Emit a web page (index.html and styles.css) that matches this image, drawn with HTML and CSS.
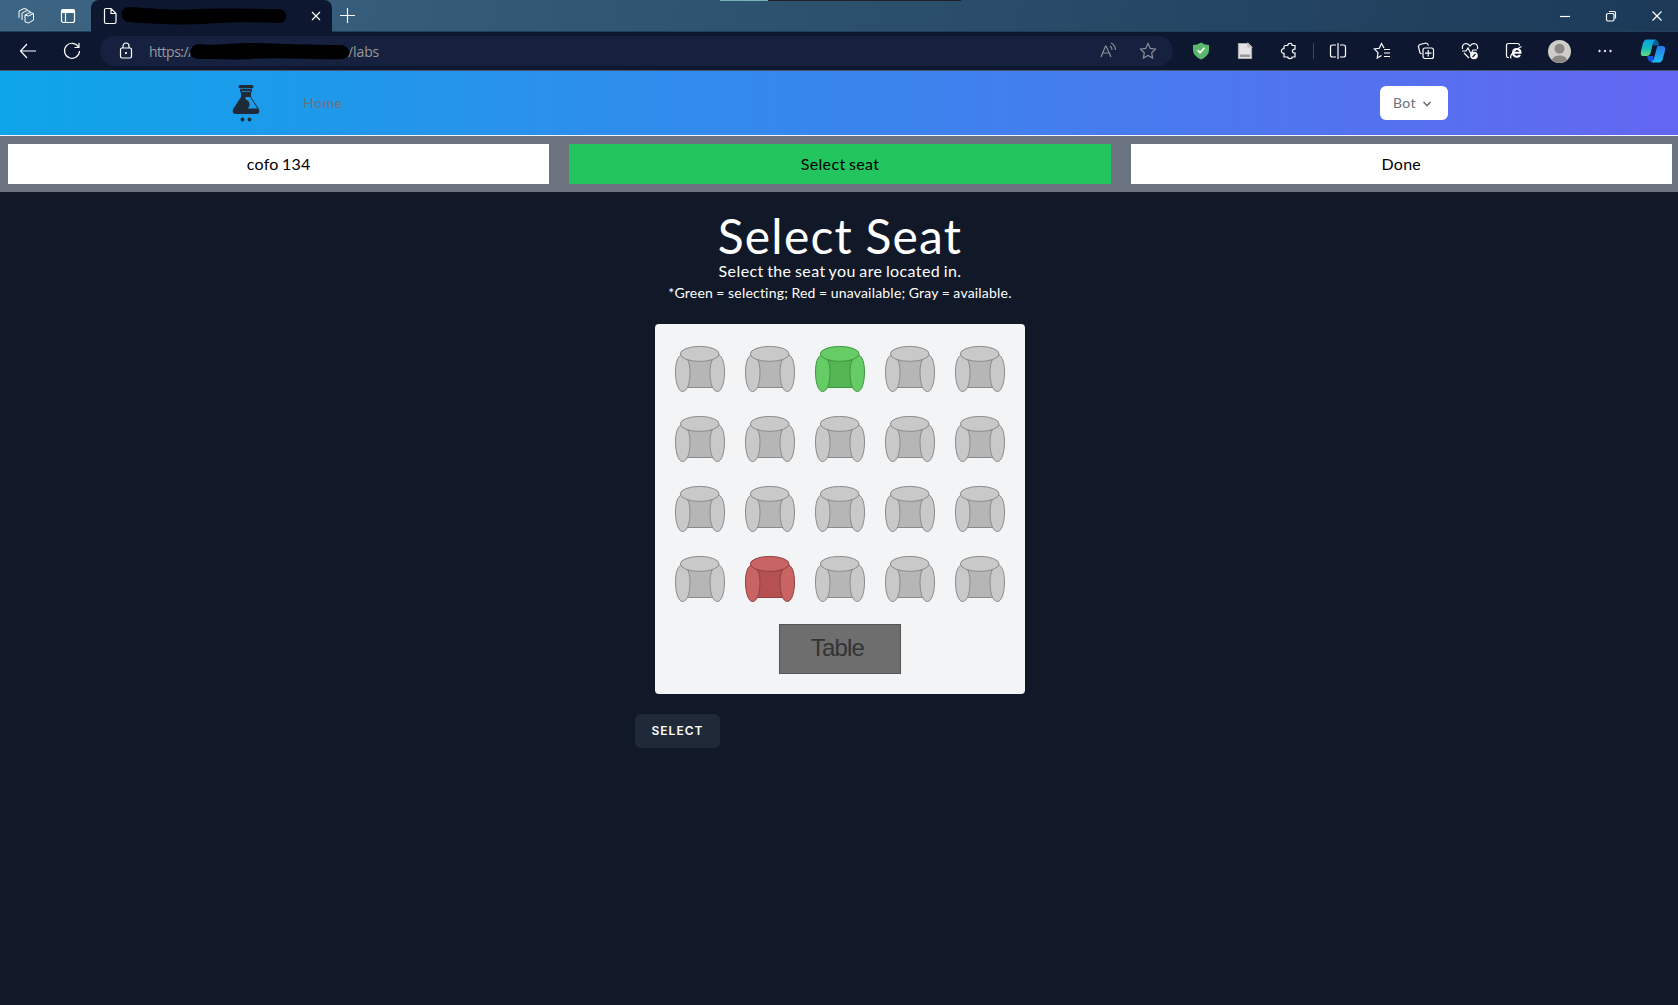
FILE: index.html
```html
<!DOCTYPE html>
<html lang="en">
<head>
<meta charset="utf-8">
<title>Select Seat</title>
<link rel="stylesheet" href="styles.css">
</head>
<body>
<svg class="defs" aria-hidden="true">
  <symbol id="seat" viewBox="0 0 50 50">
    <path class="seat-base" d="M9 16h32v27.500H9z"/>
    <path class="seat-part" d="M6 11C2.500 13 .5 19 .5 28c0 11 3 19.500 7 19.500 5 0 7.500-9 7.500-19.500 0-8-2-16-9-17zM44 11c3.500 2 5.500 8 5.500 17 0 11-3 19.500-7 19.500-5 0-7.500-9-7.500-19.500 0-8 2-16 9-17z"/>
    <ellipse class="seat-part" cx="24.700" cy="9.900" rx="19.400" ry="7.500"/>
  </symbol>
</svg>

<div class="titlebar">
  <div class="title-strip"><i></i><b></b></div>
  <svg class="workspaces" width="18" height="18" viewBox="0 0 18 18"><path d="M8 8l5-2.500 3.500 1v6.500L11.500 16 8 14.800zM8 8l3.500 1 5-2.500M5 13V6l5-2.500 3.500 1M2 10.800V4l5-2.500 3.500 1"/></svg>
  <svg class="tabs-icon" width="16" height="16" viewBox="0 0 16 16"><rect x="1.500" y="1.500" width="13" height="13" rx="2"/><path class="solid" d="M2 2h12v2.500H2z"/><path d="M5.500 5v9.500"/></svg>
  <div class="tab">
    <svg width="14" height="18" viewBox="0 0 14 18"><path d="M1.500 3q0-1.500 1.500-1.500h5l5 5V15q0 1.500-1.500 1.500H3Q1.500 16.500 1.500 15zM8 1.500v5h5"/></svg>
    <svg class="tab-mask" width="166" height="18" viewBox="0 0 166 18"><path class="ink" d="M8 0C28 1 50 4 78 2c25-1 55 0 80 0 10 1 9 14 0 14-25-1-50-1-76 1-25 1-50 0-74-2-10-1-10-15 0-15z"/></svg>
    <svg class="tab-close" width="10" height="10" viewBox="0 0 10 10"><path d="M1 1l8 8M9 1L1 9"/></svg>
  </div>
  <svg class="new-tab" width="15" height="15" viewBox="0 0 15 15"><path d="M7.500 0v15M0 7.500h15"/></svg>
  <div class="window-buttons">
    <svg width="12" height="12" viewBox="0 0 12 12"><path d="M1 6.500h10"/></svg>
    <svg width="12" height="12" viewBox="0 0 12 12"><rect x="1.500" y="3.500" width="7.500" height="7.500" rx="1.500"/><path d="M4 1.500h5Q10.500 1.500 10.500 3v5.500"/></svg>
    <svg width="12" height="12" viewBox="0 0 12 12"><path d="M1.500 1.500l9 9M10.500 1.500l-9 9"/></svg>
  </div>
</div>

<div class="toolbar">
  <svg class="back" width="18" height="16" viewBox="0 0 18 16"><path d="M17 8H1.500M8 1L1.500 8 8 15"/></svg>
  <svg class="reload" width="18" height="18" viewBox="0 0 18 18"><path d="M15.500 5A7.500 7.500 0 1 0 16.500 9M16 1v4.500h-4.500"/></svg>
  <div class="address">
    <svg class="lock" width="14" height="18" viewBox="0 0 14 18"><rect x="1.500" y="6" width="11" height="10" rx="1.500"/><path d="M4 6V4a3 3 0 0 1 6 0v2"/><circle class="solid" cx="7" cy="11" r=".5"/></svg>
    <span class="scheme">https://</span>
    <svg class="url-mask" width="160" height="17" viewBox="0 0 160 17"><path class="ink" d="M8 1C25 3 42 0 60 0c20 0 45 2 92 2 10 2 10 13 0 14-32 1-60-2-90 0-20 1-35 0-54 0C-3 15-2 3 8 1z"/></svg>
    <span>/labs</span>
    <svg class="read" width="18" height="18" viewBox="0 0 18 18"><path d="M2 15L6.500 4h.5l5 11M3.500 11h7M11 4q2 1 2 4M12 1q4 2 4.500 7"/></svg>
    <svg class="star" width="18" height="18" viewBox="0 0 18 18"><path d="M9 1.500l2.300 4.900 5.200.7-3.800 3.700.9 5.300L9 13.500l-4.600 2.600.9-5.300L1.500 7.100l5.200-.7z"/></svg>
  </div>
  <div class="tools">
    <svg class="shield" width="18" height="18" viewBox="0 0 18 18"><path class="green" d="M1 3q4 0 8-2.500Q13 3 17 3v5q0 6-8 9.500Q1 14 1 8z"/><path class="tick" d="M5.500 8l2.500 2.800 4.500-5"/></svg>
    <svg class="note" width="16" height="18" viewBox="0 0 16 18"><path class="paper" d="M1.500 1.500H11l3.500 3.500v11.500h-13z"/><path class="fold" d="M11 1.500V5h3.500z"/><path class="bar" d="M3 12.500h10V15H3z"/></svg>
    <svg class="puzzle" width="18" height="18" viewBox="0 0 18 18"><path d="M5.500 3.500h2.300c0-3 4.400-3 4.400 0H15v3.700c-3.500-.3-3.500 4.100 0 3.800v4h-2.800c0 2.200-4.400 2.200-4.400 0H4v-3.700c-3.500 0-3.500-4.600 0-4.600V5q0-1.500 1.500-1.500z"/></svg>
    <span class="divider"></span>
    <svg class="split" width="18" height="18" viewBox="0 0 18 18"><path d="M7 3H3.500Q1.500 3 1.500 5v8q0 2 2 2H7M11 3h3.500q2 0 2 2v8q0 2-2 2H11M9 1v16"/></svg>
    <svg class="favorites" width="18" height="18" viewBox="0 0 18 18"><path d="M11 6L8.500 1.500 6.300 6.300 1.300 7l3.700 3.700-.8 5.300 4.300-2.500M11 7.500h6M11 11h6M11 14.500h6"/></svg>
    <svg class="collections" width="18" height="18" viewBox="0 0 18 18"><rect x="6" y="6" width="10.500" height="10.500" rx="2"/><path d="M11.200 8v6.500M8 11.200h6.500M4.500 12L3 11 1.500 5q0-2 1.500-2.500L9 1q1.700 0 2.500 2.500"/></svg>
    <svg class="essentials" width="18" height="18" viewBox="0 0 18 18"><path d="M1.500 7C.5 1 6.500 0 9 4c2.500-4 8.500-3 7.500 3M1 9h4l2-3 3 6 2-4h4M3 11l5 5"/><circle class="solid" cx="13" cy="13.500" r="3.200"/><path class="slash" d="M11.500 15l3-3"/></svg>
    <svg class="ie" width="18" height="18" viewBox="0 0 18 18"><path d="M4 15.500H3q-1.500 0-1.500-2V3.500q0-2 2-2h9q2 0 2 2"/><path class="thick" d="M8 10.800h7.500c0-5-7.500-5-7.500 0s6 4.500 7 2.200"/><path d="M6.500 16C3.500 16 8 8 16.500 4.500"/></svg>
    <svg class="avatar" width="23" height="23" viewBox="0 0 23 23"><circle class="face" cx="11.500" cy="11.500" r="11.500"/><circle class="body" cx="11.500" cy="8.700" r="5"/><path class="body" d="M4 20q1-4.500 7.500-4.500T19 20q-3 3-7.500 3T4 20z"/></svg>
    <svg class="more" width="16" height="6" viewBox="0 0 16 6"><g class="solid"><circle cx="2.500" cy="3" r=".8"/><circle cx="8" cy="3" r=".8"/><circle cx="13.500" cy="3" r=".8"/></g></svg>
    <svg class="copilot" width="26" height="24" viewBox="0 0 26 24">
      <defs><linearGradient id="cg" x2="0" y2="1"><stop stop-color="#08a3e8"/><stop offset=".5" stop-color="#12b8bf"/><stop offset="1" stop-color="#64de83"/></linearGradient><linearGradient id="cb" x2="0" y2="1"><stop stop-color="#2678e5"/><stop offset="1" stop-color="#20bdf4"/></linearGradient></defs>
      <path fill="#0d5f9c" stroke="none" d="M13 1h3q2.500 0 3 5.500h-6z"/>
      <path fill="#1252df" stroke="none" d="M7 17h6l1 6q-6 1-7-6z"/>
      <path fill="url(#cg)" stroke="none" d="M7 .5h9q-2.500 1-3.500 5.500l-2 8q-1 3-4 3H3q-3 0-2-5l2-8Q4 .5 7 .5z"/>
      <path fill="url(#cb)" stroke="none" d="M18 7h4.500q3.500 0 2.500 5l-2 7q-1 4.500-4 4.500h-8q2.500-1 3.500-6l2-7.500q.5-3 1.500-3z"/>
    </svg>
  </div>
</div>

<nav class="site-nav">
  <div class="nav-inner">
    <svg class="logo" width="28" height="38" viewBox="0 0 28 38"><path class="dark" d="M8 1h12q1.500 0 1.500 1.500T20 4.500v3l-1 1V13l7.500 11.500Q29 30 24 30H4q-5 0-2.500-5.500L9 13V8.500l-1-1v-3Q6.500 4 6.500 2.500T8 1z"/><path class="glass" d="M8 4.700h12M9.500 7.500h9"/><path class="liquid" d="M14 13h4l7.500 11.500H15.500q2.500-2 2-5t-3.500-4q-1.500-1.500 0-2.500z"/><circle class="dark" cx="10.500" cy="35.500" r="1.900"/><circle class="dark" cx="17.500" cy="35.500" r="1.900"/></svg>
    <a class="home">Home</a>
    <button class="user-menu"><span>Bot</span><svg width="10" height="6" viewBox="0 0 10 6"><path d="M1.500 1L5 4.500 8.500 1"/></svg></button>
  </div>
</nav>

<div class="steps">
  <div class="step"><span>cofo 134</span></div>
  <div class="step current"><span>Select seat</span></div>
  <div class="step"><span>Done</span></div>
</div>

<main>
  <h1><span>Select Seat</span></h1>
  <p class="lead"><span>Select the seat you are located in.</span></p>
  <p class="legend"><span>*Green = selecting; Red = unavailable; Gray = available.</span></p>
  <div class="room">
    <div class="seats">
      <svg><use href="#seat"/></svg><svg><use href="#seat"/></svg><svg class="chosen"><use href="#seat"/></svg><svg><use href="#seat"/></svg><svg><use href="#seat"/></svg>
      <svg><use href="#seat"/></svg><svg><use href="#seat"/></svg><svg><use href="#seat"/></svg><svg><use href="#seat"/></svg><svg><use href="#seat"/></svg>
      <svg><use href="#seat"/></svg><svg><use href="#seat"/></svg><svg><use href="#seat"/></svg><svg><use href="#seat"/></svg><svg><use href="#seat"/></svg>
      <svg><use href="#seat"/></svg><svg class="taken"><use href="#seat"/></svg><svg><use href="#seat"/></svg><svg><use href="#seat"/></svg><svg><use href="#seat"/></svg>
    </div>
    <div class="table">Table</div>
  </div>
  <button class="select">SELECT</button>
</main>
</body>
</html>
```
FILE: styles.css
```css
* { box-sizing: border-box; }
body { margin: 0; height: 1005px; overflow: hidden; background: #111827; font-family: Lato, "Open Sans", sans-serif; color: #fff; }
button { font-family: inherit; border: 0; }
svg { display: block; flex: none; fill: none; stroke: #fff; stroke-width: 1.2; }
.solid { fill: #fff; }
.ink { fill: #000; stroke: none; }
.defs { position: absolute; width: 0; height: 0; }

.titlebar { position: relative; height: 32px; display: flex; align-items: center; background: linear-gradient(100deg, #3d6583, #284c69 60%, #1c3958); border-bottom: 1px solid #203f59; }
.title-strip { position: absolute; top: 0; left: 720px; width: 241px; height: 1px; display: flex; }
.title-strip i { width: 48px; background: #78b4b5; }
.title-strip b { flex: 1; background: #242126; }
.workspaces { margin-left: 17px; stroke-width: 1; }
.tabs-icon { margin-left: 25px; }
.tab { width: 241px; height: 33px; margin-left: 15px; margin-bottom: -1px; padding-left: 12px; display: flex; align-items: center; background: #0e1730; border-radius: 8px 8px 0 0; z-index: 1; }
.tab-mask { margin-left: 4px; }
.tab-close { margin-left: 24px; }
.new-tab { margin-left: 8px; }
.window-buttons { margin-left: auto; margin-right: 15px; display: flex; gap: 34px; }

.toolbar { height: 39px; display: flex; align-items: center; background: #0e1730; border-bottom: 1px solid #48536c; }
.back { margin-left: 19px; }
.reload { margin-left: 26px; }
.address { width: 1073px; height: 30px; margin-left: 19px; padding-left: 19px; display: flex; align-items: center; background: #16213f; border-radius: 15px; font: 14px "Open Sans", sans-serif; color: #9a9a9e; letter-spacing: -.1px; }
.scheme { margin-left: 16px; width: 41px; white-space: nowrap; letter-spacing: -.5px; }
.url-mask { z-index: 1; margin-right: -2px; }
.read { margin-left: auto; stroke: #8b8e98; }
.star { margin-left: 22px; margin-right: 16px; stroke: #8b8e98; }
.tools { display: flex; align-items: center; flex: 1; margin-left: 19px; }
.green { fill: #59b86b; stroke: none; }
.tick { stroke-width: 1.7; }
.note { margin-left: 27px; }
.paper { fill: #e4e4e4; stroke: #aaa; }
.fold { fill: #fff; stroke: #bbb; }
.bar { fill: #999; stroke: none; }
.puzzle { margin-left: 27px; }
.divider { width: 1px; height: 16px; margin-left: 15px; background: #3e465b; }
.split { margin-left: 15px; }
.favorites, .collections, .essentials, .ie { margin-left: 26px; }
.slash { stroke: #0e1730; }
.thick { stroke-width: 2; }
.avatar { margin-left: 25px; stroke: none; }
.face { fill: #cfcdca; }
.body { fill: #8a8784; }
.more { margin-left: 26px; }
.more circle { stroke: #fff; stroke-width: .8; }
.copilot { margin-left: 27px; }

.site-nav { height: 65px; background: linear-gradient(to right, #0ea5e9, #6366f1); border-bottom: 1px solid #f3f4f6; }
.nav-inner { width: 1217px; height: 64px; margin-left: 231px; display: flex; align-items: center; }
.logo { margin-left: 1px; stroke: none; }
.logo .glass { stroke: #1c9bea; stroke-width: .8; }
.dark { fill: #1f2937; }
.liquid { fill: #1c9bea; }
.home { margin-left: 43px; padding-bottom: 1px; font-size: 14px; letter-spacing: .6px; color: #6b7280; }
.user-menu { width: 68px; height: 34px; margin-left: auto; padding: 0 16px 1px 13px; display: flex; align-items: center; justify-content: space-between; background: #fff; border-radius: 6px; font-size: 14px; letter-spacing: .4px; color: #6b7280; }
.user-menu svg { margin-top: 2px; stroke: #6b7280; stroke-width: 1.6; }

.steps { height: 56px; padding: 8px 6px 8px 8px; display: grid; grid-template-columns: repeat(3, 1fr); gap: 20px; background: #6b7280; }
.step { padding-bottom: 2px; display: flex; align-items: center; justify-content: center; background: #fff; color: #000; font-size: 16px; letter-spacing: .25px; word-spacing: -1px; }
.current { background: #22c55e; letter-spacing: .35px; }

main { width: 410px; margin: 20px 0 0 635px; display: flex; flex-direction: column; align-items: center; white-space: nowrap; }
h1 { margin: 0; font-size: 48px; line-height: 48px; font-weight: 400; letter-spacing: 1.2px; word-spacing: -1px; }
.lead { margin: -1px 0 1px; font-size: 16px; line-height: 24px; letter-spacing: .4px; word-spacing: -1px; }
.legend { margin: -1px 0 1px; font-size: 14px; line-height: 20px; letter-spacing: .2px; word-spacing: -.4px; }
.room { width: 370px; height: 370px; margin-top: 20px; padding: 20px; display: flex; flex-direction: column; align-items: center; background: #f3f4f6; border-radius: 4px; }
.seats { --seat: #c9c9c9; --base: #b6b6b6; display: grid; grid-template-columns: repeat(5, 50px); gap: 20px; }
.seats svg { width: 50px; height: 50px; stroke: #8b8b8b; stroke-width: 1; }
.seat-part { fill: var(--seat); }
.seat-base { fill: var(--base); }
.seats .chosen { --seat: #66cc66; --base: #53b653; stroke: #3f963f; }
.seats .taken { --seat: #c96464; --base: #b65151; stroke: #914040; }
.table { width: 122px; height: 50px; margin-top: 20px; padding-right: 5px; border: 1px solid #565656; background: #6e6e6e; color: #333; font: 24px/46px "Liberation Sans", Arial, sans-serif; letter-spacing: -.8px; text-align: center; }
.select { align-self: flex-start; width: 85px; height: 34px; margin-top: 20px; padding: 0; background: #1f2937; border-radius: 6px; color: #fff; font: 600 12px/34px Inter, sans-serif; letter-spacing: 1px; }
```
